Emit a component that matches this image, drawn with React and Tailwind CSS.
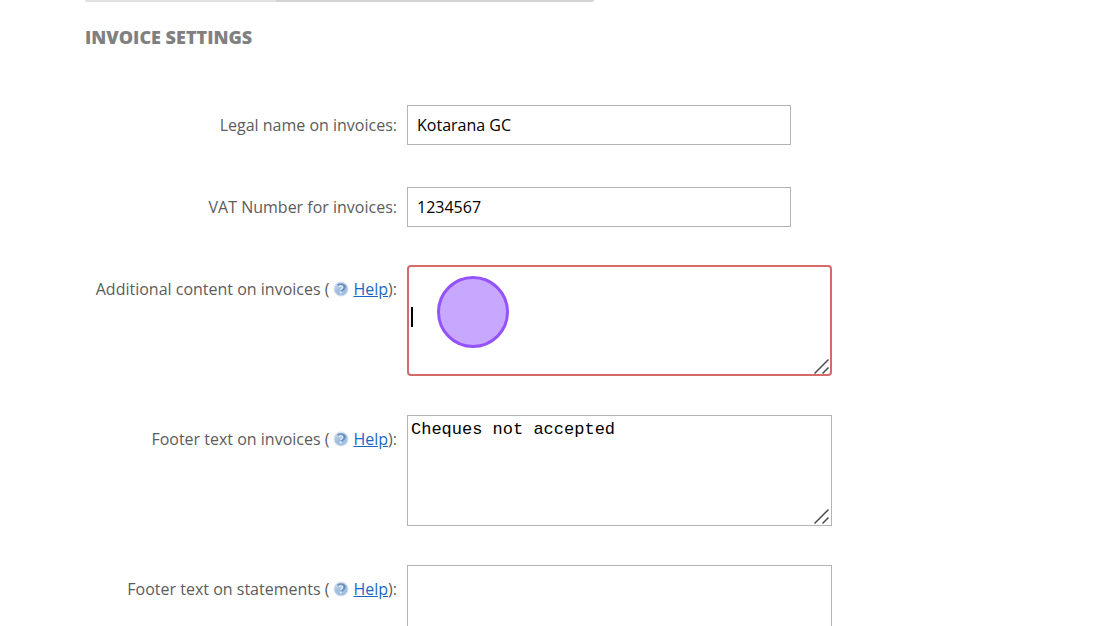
import React from "react";

function HelpIcon() {
  return (
    <svg viewBox="0 0 16 16" className="mr-1 ml-1 inline-block size-4 align-[-2px]" aria-hidden="true">
      <defs>
        <linearGradient id="help-ball" x1="0.2" y1="0" x2="0.6" y2="1">
          <stop offset="0" stopColor="#d3dfec" />
          <stop offset="0.5" stopColor="#a5c0df" />
          <stop offset="1" stopColor="#9cbfe6" />
        </linearGradient>
      </defs>
      <circle cx="8" cy="8" r="7" fill="url(#help-ball)" stroke="#d9e2ee" strokeWidth="1" />
      <path d="M4.800 4.600c1.800-1.500 5-1.200 6.400.2.800 1.200-.1 2.600-1.600 3.600l-1.400 1.600" fill="none" stroke="#4a76ae" strokeWidth="2.600" opacity="0.7" />
      <path d="M5.800 6c.5-1.700 3.900-1.500 3.900.3 0 1.300-1.900 1.500-1.900 3" fill="none" stroke="#dfeaf6" strokeWidth="1.500" />
      <circle cx="7.800" cy="11.600" r="1" fill="#e8f1fa" />
    </svg>
  );
}

function ResizeGrip() {
  return (
    <svg viewBox="0 0 16 16" className="pointer-events-none absolute right-0.5 bottom-0.5 size-4" aria-hidden="true">
      <path d="M0.500 15.500 14.500 1.500M8.500 15.500l6-6" fill="none" stroke="#4a4a4a" strokeWidth="1.500" />
    </svg>
  );
}

function TextRow({ id, label, value }) {
  return (
    <div className="grid grid-cols-[312px_1fr] gap-[10px]">
      <label htmlFor={id} className="pt-2 text-right leading-6">
        {label}:
      </label>
      <input
        id={id}
        type="text"
        defaultValue={value}
        className="h-10 w-full max-w-[384px] border border-[#b3b3b3] bg-white px-[9px] text-black outline-none"
      />
    </div>
  );
}

function AreaRow({ id, label, value, active }) {
  return (
    <div className="grid grid-cols-[312px_1fr] gap-[10px]">
      <div className="pt-3 text-right leading-6">
        <label htmlFor={id}>{label}</label> (
        <HelpIcon />
        <a href="#help" className="text-[#1b67c4] underline">
          Help
        </a>
        ):
      </div>
      <div className="relative h-[111px] w-full max-w-[425px]">
        <textarea
          id={id}
          defaultValue={value}
          className={
            active
              ? "block h-full w-full resize-none rounded-[4px] border-2 border-[#d46a6a] bg-white px-[3px] py-1 font-['Liberation_Mono',monospace] text-[17px] leading-5 text-black outline-none"
              : "block h-full w-full resize-none border border-[#b3b3b3] bg-white px-[3px] py-1 font-['Liberation_Mono',monospace] text-[17px] leading-5 text-black outline-none"
          }
        />
        <ResizeGrip />
        {active && (
          <>
            <span className="absolute top-[42px] left-1 h-5 w-0.5 bg-black" />
            <span className="absolute top-[11px] left-[30px] size-[72px] rounded-full border-3 border-[#9452fa] bg-[#c8a8ff]" />
          </>
        )}
      </div>
    </div>
  );
}

export default function App() {
  return (
    <main className="h-screen overflow-hidden bg-white pr-4 pl-[85px] font-['Open_Sans',sans-serif] text-[16px] text-[#5c5c5c]">
      <div className="flex h-0.5 w-full max-w-[509px] overflow-hidden rounded-b-[2px]">
        <div className="w-3/8 bg-[#e2e2e2]" />
        <div className="flex-1 bg-[#d3d3d3]" />
      </div>
      <h1 className="mt-[23px] text-[18px] leading-6 font-extrabold text-[#808080]">INVOICE SETTINGS</h1>
      <form className="mt-14">
        <div className="flex flex-col gap-[42px]">
          <TextRow id="legal-name" label="Legal name on invoices" value="Kotarana GC" />
          <TextRow id="vat-number" label="VAT Number for invoices" value="1234567" />
        </div>
        <div className="mt-[38px] flex flex-col gap-[39px]">
          <AreaRow id="additional-content" label="Additional content on invoices" value="" active />
          <AreaRow id="invoice-footer" label="Footer text on invoices" value="Cheques not accepted" />
          <AreaRow id="statement-footer" label="Footer text on statements" value="" />
        </div>
      </form>
    </main>
  );
}
